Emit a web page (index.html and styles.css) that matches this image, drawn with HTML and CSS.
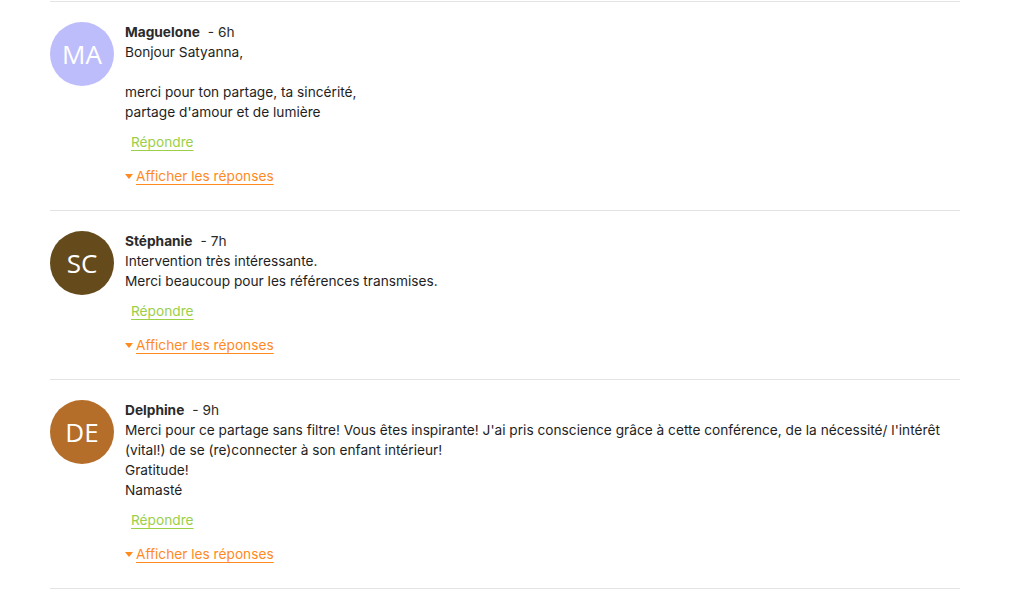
FILE: index.html
```html
<!DOCTYPE html>
<html lang="fr">
<head>
<meta charset="utf-8">
<link rel="stylesheet" href="styles.css">
</head>
<body>
<div class="comments">
  <div class="comment">
    <div class="avatar av-ma">MA</div>
    <div class="content">
      <div class="head"><span class="name">Maguelone</span><span class="time">- 6h</span></div>
      <div class="body">Bonjour Satyanna,<br><br>merci pour ton partage, ta sincérité,<br>partage d'amour et de lumière</div>
      <a class="reply" href="#">Répondre</a>
      <a class="show" href="#"><span class="caret"></span> Afficher les réponses</a>
    </div>
  </div>
  <div class="comment">
    <div class="avatar av-sc">SC</div>
    <div class="content">
      <div class="head"><span class="name">Stéphanie</span><span class="time">- 7h</span></div>
      <div class="body">Intervention très intéressante.<br>Merci beaucoup pour les références transmises.</div>
      <a class="reply" href="#">Répondre</a>
      <a class="show" href="#"><span class="caret"></span> Afficher les réponses</a>
    </div>
  </div>
  <div class="comment">
    <div class="avatar av-de">DE</div>
    <div class="content">
      <div class="head"><span class="name">Delphine</span><span class="time">- 9h</span></div>
      <div class="body">Merci pour ce partage sans filtre! Vous êtes inspirante! J'ai pris conscience grâce à cette conférence, de la nécessité/ l'intérêt (vital!) de se (re)connecter à son enfant intérieur!<br>Gratitude!<br>Namasté</div>
      <a class="reply" href="#">Répondre</a>
      <a class="show" href="#"><span class="caret"></span> Afficher les réponses</a>
    </div>
  </div>
</div>
</body>
</html>
```

FILE: styles.css
```css
html, body {
  margin: 0;
  padding: 0;
  background: #ffffff;
}
body {
  font-family: "Inter", "Liberation Sans", sans-serif;
  font-size: 13.7px;
  line-height: 20px;
  color: #1e1e1e;
}
.comments {
  width: 910px;
  margin: 1px 0 0 50px;
  border-top: 1px solid #e3e3e3;
}
.comment {
  display: flex;
  gap: 11px;
  padding: 20px 0 24px;
  border-bottom: 1px solid #e3e3e3;
}
.avatar {
  flex: 0 0 64px;
  width: 64px;
  height: 64px;
  border-radius: 50%;
  color: #fff;
  font-family: "Open Sans", sans-serif;
  font-size: 26px;
  display: flex;
  align-items: center;
  justify-content: center;
}
.av-ma { background: #bebdfc; }
.av-sc { background: #654b1c; }
.av-de { background: #b56d2a; }
.content {
  flex: 1;
  display: flex;
  flex-direction: column;
  align-items: flex-start;
}
.head {
  display: flex;
  gap: 8px;
  color: #2a2a2a;
}
.name {
  font-weight: 700;
  color: #2a2a2a;
}
.time { color: #2a2a2a; }
.body { color: #1e1e1e; }
.reply {
  margin: 10px 0 0 6px;
  color: #9bcf48;
  text-decoration: underline;
  text-underline-offset: 3px;
}
.show {
  margin-top: 14px;
  color: #ff8a1e;
  text-decoration: underline;
  text-underline-offset: 3px;
  display: flex;
  align-items: center;
}
.caret {
  display: inline-block;
  width: 0;
  height: 0;
  border-left: 4px solid transparent;
  border-right: 4px solid transparent;
  border-top: 5px solid #ff8a1e;
  margin-right: 3px;
}
```
